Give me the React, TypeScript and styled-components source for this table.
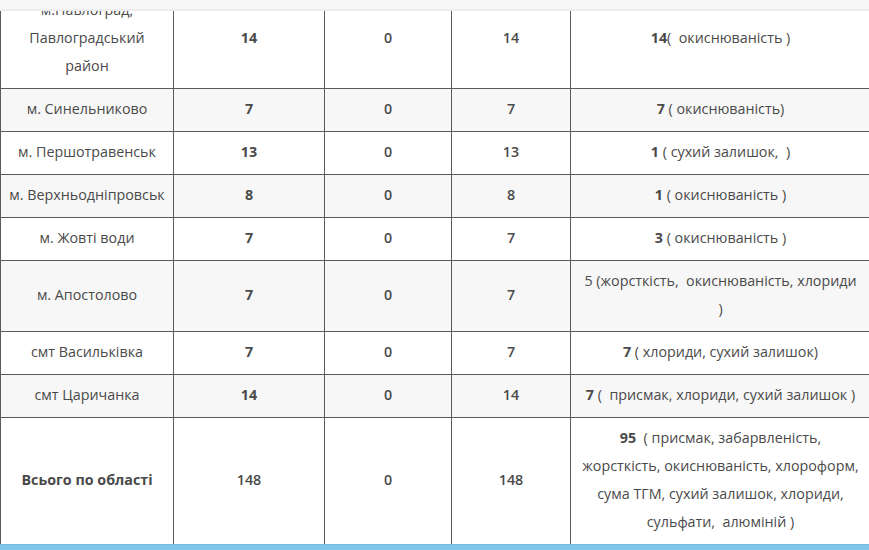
import React from "react";
import styled, { createGlobalStyle } from "styled-components";

const Global = createGlobalStyle`
  html, body { margin: 0; padding: 0; background: #ffffff; overflow: hidden; }
  body { font-family: "Open Sans", "Noto Sans", sans-serif; }
`;

const TopBar = styled.div`
  position: fixed;
  top: 0;
  left: 0;
  right: 0;
  height: 9px;
  background: #f7f7f7;
  border-bottom: 2px solid #ebebf0;
  z-index: 2;
`;

const BottomBar = styled.div`
  position: fixed;
  left: 0;
  right: 0;
  bottom: 0;
  height: 6px;
  background: rgba(118, 194, 230, 0.93);
  z-index: 2;
`;

const Page = styled.main`
  margin-top: -11px;
`;

const Table = styled.table`
  width: 870px;
  table-layout: fixed;
  border-collapse: collapse;
  color: #4a4a4a;
  font-size: 14.3px;
  line-height: 28px;
`;

const Row = styled.tr<{ $shade: boolean }>`
  background: ${(p) => (p.$shade ? "#f7f7f7" : "#ffffff")};
`;

const Cell = styled.td<{ $weight?: number }>`
  border: 1px solid #5a5a5a;
  padding: 6px 8px 8px;
  text-align: center;
  vertical-align: middle;
  font-weight: ${(p) => p.$weight ?? 400};
  word-wrap: break-word;
`;

const Strong = styled.b`
  font-weight: 700;
`;

type RowData = {
  place: string[];
  placeBold?: boolean;
  a: string;
  aBold: boolean;
  b: string;
  c: string;
  lead: string;
  leadBold: boolean;
  rest: string[];
};

const rows: RowData[] = [
  { place: ["м.Павлоград,", "Павлоградський", "район"], a: "14", aBold: true, b: "0", c: "14", lead: "14", leadBold: true, rest: ["(\u00a0 окиснюваність )"] },
  { place: ["м. Синельниково"], a: "7", aBold: true, b: "0", c: "7", lead: "7", leadBold: true, rest: ["\u00a0( окиснюваність)"] },
  { place: ["м. Першотравенськ"], a: "13", aBold: true, b: "0", c: "13", lead: "1", leadBold: true, rest: [" ( сухий залишок,\u00a0 )"] },
  { place: ["м. Верхньодніпровськ"], a: "8", aBold: true, b: "0", c: "8", lead: "1", leadBold: true, rest: [" ( окиснюваність )"] },
  { place: ["м. Жовті води"], a: "7", aBold: true, b: "0", c: "7", lead: "3", leadBold: true, rest: [" ( окиснюваність )"] },
  { place: ["м. Апостолово"], a: "7", aBold: true, b: "0", c: "7", lead: "5", leadBold: false, rest: [" (жорсткість,\u00a0 окиснюваність, хлориди", ")"] },
  { place: ["смт Васильківка"], a: "7", aBold: true, b: "0", c: "7", lead: "7", leadBold: true, rest: [" ( хлориди, сухий залишок)"] },
  { place: ["смт Царичанка"], a: "14", aBold: true, b: "0", c: "14", lead: "7", leadBold: true, rest: [" (\u00a0 присмак, хлориди, сухий залишок )"] },
  {
    place: ["Всього по області"],
    placeBold: true,
    a: "148",
    aBold: false,
    b: "0",
    c: "148",
    lead: "95",
    leadBold: true,
    rest: [
      "\u00a0 ( присмак, забарвленість,",
      "жорсткість, окиснюваність, хлороформ,",
      "сума ТГМ, сухий залишок, хлориди,",
      "сульфати,\u00a0 алюміній )",
    ],
  },
];

function Lines({ lines }: { lines: string[] }) {
  return (
    <>
      {lines.map((l, i) => (
        <React.Fragment key={i}>
          {i > 0 && <br />}
          {l}
        </React.Fragment>
      ))}
    </>
  );
}

export default function App() {
  return (
    <>
      <Global />
      <TopBar />
      <Page>
        <Table>
          <colgroup>
            <col style={{ width: 173 }} />
            <col style={{ width: 151 }} />
            <col style={{ width: 127 }} />
            <col style={{ width: 119 }} />
            <col style={{ width: 300 }} />
          </colgroup>
          <tbody>
            {rows.map((r, i) => (
              <Row key={i} $shade={i % 2 === 1}>
                <Cell $weight={r.placeBold ? 700 : 400}>
                  <Lines lines={r.place} />
                </Cell>
                <Cell $weight={r.aBold ? 700 : 600}>{r.a}</Cell>
                <Cell $weight={600}>{r.b}</Cell>
                <Cell $weight={600}>{r.c}</Cell>
                <Cell>
                  {r.leadBold ? <Strong>{r.lead}</Strong> : r.lead}
                  <Lines lines={r.rest} />
                </Cell>
              </Row>
            ))}
          </tbody>
        </Table>
      </Page>
      <BottomBar />
    </>
  );
}
